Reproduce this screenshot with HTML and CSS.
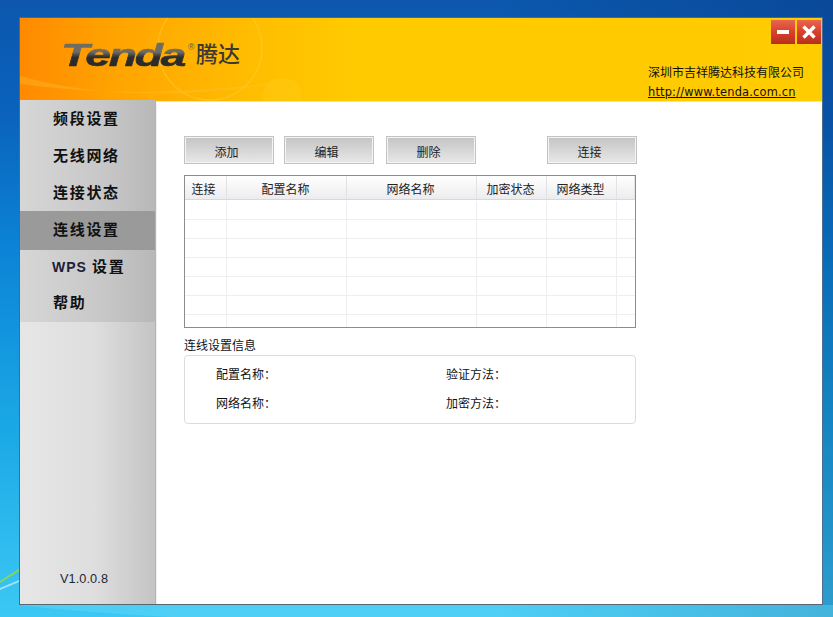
FILE: index.html
```html
<!DOCTYPE html>
<html lang="zh">
<head>
<meta charset="utf-8">
<title>Tenda</title>
<link rel="stylesheet" href="styles.css">
</head>
<body>
<svg class="wallpaper" width="833" height="617" viewBox="0 0 833 617">
  <path d="M0 581 L19 569 L19 571 L0 583Z" fill="#8fd84a"/>
  <path d="M0 588 L19 580 L19 582 L0 590Z" fill="#cdf2fa" opacity=".7"/>
  <path d="M19 605 H833 V617 H170 Q80 612 19 605Z" fill="#6fdcf8" opacity=".35"/>
</svg>
<main class="window">
  <header class="banner">
    <svg class="glow" width="802" height="83" viewBox="0 0 802 83">
      <circle cx="190" cy="30" r="52" fill="none" stroke="#ffd84a" stroke-width="1.5" opacity=".35"/>
      <circle cx="262" cy="80" r="20" fill="#ffd21e" opacity=".3"/>
      <path d="M0 58 Q120 92 290 60 Q130 84 0 66Z" fill="#ffc83a" opacity=".3"/>
    </svg>
    <div class="logo">
      <span class="logo-word">Tenda</span><span class="logo-reg">®</span><span class="logo-cn">腾达</span>
    </div>
    <div class="window-buttons">
      <button class="win-btn" aria-label="最小化"><svg width="24" height="24" viewBox="0 0 24 24"><rect x="6" y="10" width="12" height="4" fill="#fff"/></svg></button>
      <button class="win-btn" aria-label="关闭"><svg width="24" height="24" viewBox="0 0 24 24"><path d="M6.5 6.5 L17.5 17.5 M17.5 6.5 L6.5 17.5" stroke="#fff" stroke-width="3.4"/></svg></button>
    </div>
    <div class="company">
      <div>深圳市吉祥腾达科技有限公司</div>
      <a class="company-link" href="#">http://www.tenda.com.cn</a>
    </div>
  </header>
  <div class="body">
    <nav class="sidebar">
      <ul class="menu">
        <li class="menu-item">频段设置</li>
        <li class="menu-item">无线网络</li>
        <li class="menu-item">连接状态</li>
        <li class="menu-item active">连线设置</li>
        <li class="menu-item lower"><span class="latin">WPS</span> 设置</li>
        <li class="menu-item lower">帮助</li>
      </ul>
      <div class="version">V1.0.0.8</div>
    </nav>
    <section class="content">
      <div class="toolbar">
        <button class="btn">添加</button>
        <button class="btn">编辑</button>
        <button class="btn">删除</button>
        <button class="btn btn-connect">连接</button>
      </div>
      <div class="table">
        <div class="thead">
          <div class="th c1">连接</div>
          <div class="th c2">配置名称</div>
          <div class="th c3">网络名称</div>
          <div class="th c4">加密状态</div>
          <div class="th c5">网络类型</div>
          <div class="th c6"></div>
        </div>
        <div class="row"><div class="c1"></div><div class="c2"></div><div class="c3"></div><div class="c4"></div><div class="c5"></div><div class="c6"></div></div>
        <div class="row"><div class="c1"></div><div class="c2"></div><div class="c3"></div><div class="c4"></div><div class="c5"></div><div class="c6"></div></div>
        <div class="row"><div class="c1"></div><div class="c2"></div><div class="c3"></div><div class="c4"></div><div class="c5"></div><div class="c6"></div></div>
        <div class="row"><div class="c1"></div><div class="c2"></div><div class="c3"></div><div class="c4"></div><div class="c5"></div><div class="c6"></div></div>
        <div class="row"><div class="c1"></div><div class="c2"></div><div class="c3"></div><div class="c4"></div><div class="c5"></div><div class="c6"></div></div>
        <div class="row"><div class="c1"></div><div class="c2"></div><div class="c3"></div><div class="c4"></div><div class="c5"></div><div class="c6"></div></div>
        <div class="row row-last"><div class="c1"></div><div class="c2"></div><div class="c3"></div><div class="c4"></div><div class="c5"></div><div class="c6"></div></div>
      </div>
      <h2 class="info-title">连线设置信息</h2>
      <div class="info">
        <div class="info-item">配置名称：</div>
        <div class="info-item">验证方法：</div>
        <div class="info-item">网络名称：</div>
        <div class="info-item">加密方法：</div>
      </div>
    </section>
  </div>
</main>
</body>
</html>
```

FILE: styles.css
```css
* { box-sizing: border-box; }
html, body { margin: 0; height: 617px; overflow: hidden; }
body {
  padding: 17px 0 0 19px;
  position: relative;
  font-family: "Noto Sans CJK SC", "Liberation Sans", sans-serif;
  font-size: 12px;
  color: #111;
  background:
    linear-gradient(90deg, rgba(0,30,90,0) 60%, rgba(0,30,90,.25) 100%),
    linear-gradient(180deg, #0c57ad 0%, #0a62bc 18%, #0b83d6 40%, #1ba9e6 70%, #3cc8f4 100%);
}
.wallpaper { position: absolute; left: 0; top: 0; }
.window {
  position: relative;
  width: 804px;
  height: 588px;
  border: 1px solid #5c6670;
  border-top-color: #3a6a9c;
  border-right-color: #4d6f8f;
  display: flex;
  flex-direction: column;
  background: #fff;
}
.banner {
  position: relative;
  height: 83px;
  flex: none;
  background: linear-gradient(90deg, #ff8a00 0%, #ffa400 12%, #ffbc00 28%, #ffcb00 42%, #ffcc00 100%);
  overflow: hidden;
}
.glow { position: absolute; left: 0; top: 0; }
.logo {
  position: absolute;
  left: 41px;
  top: 18px;
  display: flex;
  align-items: flex-start;
  line-height: 1;
}
.logo-word {
  font-family: "Liberation Sans", sans-serif;
  font-weight: 700;
  font-style: italic;
  font-size: 32px;
  letter-spacing: -1.5px;
  line-height: 38px;
  display: block;
  width: 127px;
  transform: scaleX(1.44);
  transform-origin: left center;
  background: linear-gradient(180deg, #6f6c64 0%, #6f6c64 42%, #2d2d2e 56%, #262626 100%);
  -webkit-background-clip: text;
  background-clip: text;
  color: transparent;
  -webkit-text-stroke: .6px transparent;
  -webkit-box-reflect: below -12px linear-gradient(transparent 78%, rgba(0,0,0,.18));
}
.logo-reg {
  font-family: "Liberation Sans", sans-serif;
  font-size: 9px;
  color: #5d5a50;
  margin-top: 7px;
  width: 8px;
}
.logo-cn {
  font-size: 22px;
  font-weight: 500;
  color: #3b3a36;
  margin-top: 5px;
}
.window-buttons {
  position: absolute;
  right: 1px;
  top: 2px;
  display: flex;
  gap: 2px;
}
.win-btn {
  width: 24px;
  height: 24px;
  padding: 0;
  border: 0;
  display: block;
  background: linear-gradient(180deg, #e8664f 0%, #d8402c 50%, #b82e1e 100%);
}
.win-btn svg { display: block; }
.company {
  position: absolute;
  left: 628px;
  top: 44px;
  line-height: 20px;
  font-size: 12px;
  color: #111;
}
.company-link {
  font-family: "DejaVu Sans", sans-serif;
  font-size: 11.4px;
  letter-spacing: .016em;
  color: #111;
  display: block;
  line-height: 16px;
  margin-top: 2px;
}
.body { flex: 1; display: flex; min-height: 0; }
.sidebar {
  position: relative;
  margin-top: -1px;
  width: 136px;
  flex: none;
  display: flex;
  flex-direction: column;
  justify-content: space-between;
  background: linear-gradient(90deg, #e6e6e6 0%, #dedede 55%, #c4c4c4 100%);
  border-right: 1px solid #b4b4b4;
}
.menu {
  list-style: none;
  margin: 0;
  padding: 0;
  background: linear-gradient(90deg, #d6d6d6 0%, #c8c8c8 60%, #b8b8b8 100%);
}
.menu-item {
  height: 37px;
  line-height: 36px;
  padding-left: 33px;
  font-size: 15px;
  font-weight: 700;
  letter-spacing: 1.7px;
  color: #111;
}
.menu-item.active {
  height: 39px;
  line-height: 35px;
  background: #9a9a9a;
}
.menu-item.lower { height: 36px; line-height: 31px; }
.latin {
  font-family: "Liberation Sans", sans-serif;
  font-size: 14px;
  letter-spacing: 1px;
  color: #1c2038;
  margin-left: -1px;
}
.version {
  font-family: "Liberation Sans", sans-serif;
  font-size: 12.7px;
  letter-spacing: .1px;
  color: #222836;
  padding: 0 0 17px 40px;
  line-height: 16px;
}
.content {
  flex: 1;
  padding: 34px 0 0 27px;
  border-left: 1px solid #eef0f2;
  border-top: 1px solid #e2e6ea;
}
.toolbar { display: flex; width: 453px; }
.btn {
  width: 90px;
  height: 28px;
  padding: 3px 5px 0 0;
  font-family: inherit;
  font-size: 12px;
  color: #222;
  border: 1px solid #c2c2c2;
  outline: 1px solid #f4f4f4;
  outline-offset: -2px;
  background: linear-gradient(180deg, #c4c4c4 0%, #d2d2d2 40%, #e8e8e8 100%);
  margin-right: 12px;
}
.btn:first-child { margin-right: 10px; }
.btn-connect { margin-left: auto; margin-right: 0; }
.table {
  width: 452px;
  height: 153px;
  margin-top: 11px;
  border: 1px solid #8c8c8c;
  overflow: hidden;
}
.thead, .row { display: flex; }
.thead {
  height: 24px;
  margin-bottom: 1px;
  line-height: 26px;
  text-align: center;
  font-size: 12px;
  color: #222;
  background: linear-gradient(180deg, #ffffff 0%, #f4f4f6 60%, #ececee 100%);
  border-bottom: 1px solid #d8d8d8;
}
.th { border-right: 1px solid #e2e2e4; padding-right: 2px; }
.th.c1 { padding-right: 4px; }
.row { height: 19px; border-bottom: 1px solid #eeeeee; }
.row > div { border-right: 1px solid #eeeeee; }
.row-last { border-bottom: 0; }
.c1 { width: 42px; }
.c2 { width: 120px; }
.c3 { width: 130px; }
.c4 { width: 70px; }
.c5 { width: 70px; }
.c6 { width: 18px; }
.row .c6 { border-right: 0; }
.info-title {
  margin: 7px 0 0;
  font-size: 12px;
  font-weight: 400;
  line-height: 20px;
  color: #111;
}
.info {
  width: 452px;
  height: 69px;
  border: 1px solid #d8dde2;
  border-radius: 4px;
  padding: 8px 0 0 31px;
  display: grid;
  grid-template-columns: 230px 1fr;
  grid-auto-rows: 29px;
  line-height: 20px;
  color: #111;
}
```
